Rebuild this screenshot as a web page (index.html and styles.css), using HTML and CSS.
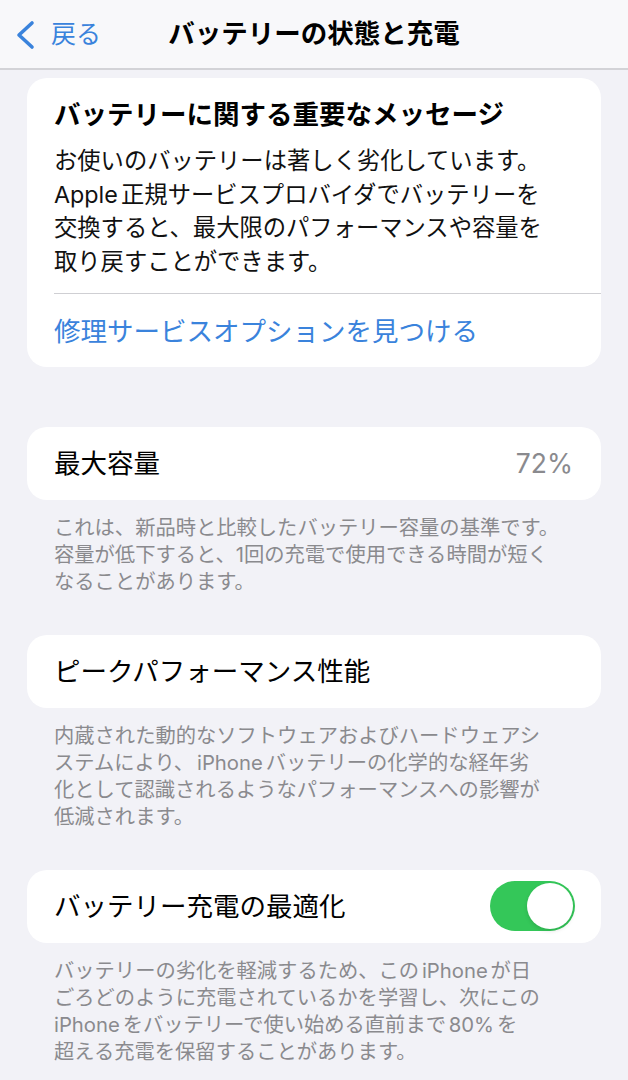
FILE: index.html
```html
<!DOCTYPE html>
<html lang="ja">
<head>
<meta charset="utf-8">
<title>バッテリーの状態と充電</title>
<link rel="stylesheet" href="styles.css">
</head>
<body>
<header class="navbar">
  <a class="back" href="#">
    <svg class="chev" width="22" height="30" viewBox="0 0 22 30" aria-hidden="true">
      <polyline points="18,3 5,15 18,27" fill="none" stroke="#3a83dc" stroke-width="3.6" stroke-linecap="round" stroke-linejoin="round"/>
    </svg>
    <span>戻る</span>
  </a>
  <h1 class="nav-title">バッテリーの状態と充電</h1>
  <div></div>
</header>

<main class="content">
  <section class="card msg-card">
    <div class="msg">
      <h2 class="msg-title">バッテリーに関する重要なメッセージ</h2>
      <p class="msg-body">お使いのバッテリーは著しく劣化しています。<br><span class="lat first">Apple</span>正規サービスプロバイダでバッテリーを<br>交換すると、最大限のパフォーマンスや容量を<br>取り戻すことができます。</p>
    </div>
    <a class="link-row" href="#">修理サービスオプションを見つける</a>
  </section>

  <section class="group first-group">
    <div class="card row">
      <span class="label">最大容量</span>
      <span class="value">72%</span>
    </div>
    <p class="footer">これは、新品時と比較したバッテリー容量の基準です。<br>容量が低下すると、1回の充電で使用できる時間が短く<br>なることがあります。</p>
  </section>

  <section class="group">
    <div class="card row">
      <span class="label">ピークパフォーマンス性能</span>
    </div>
    <p class="footer">内蔵された動的なソフトウェアおよびハードウェアシ<br>ステムにより、<span class="lat">iPhone</span>バッテリーの化学的な経年劣<br>化として認識されるようなパフォーマンスへの影響が<br>低減されます。</p>
  </section>

  <section class="group">
    <div class="card row">
      <span class="label">バッテリー充電の最適化</span>
      <span class="toggle on"><span class="knob"></span></span>
    </div>
    <p class="footer">バッテリーの劣化を軽減するため、この<span class="lat">iPhone</span>が日<br>ごろどのように充電されているかを学習し、次にこの<br><span class="lat first">iPhone</span>をバッテリーで使い始める直前まで<span class="lat">80%</span>を<br>超える充電を保留することがあります。</p>
  </section>
</main>
</body>
</html>
```

FILE: styles.css
```css
* { box-sizing: border-box; }

html, body {
  margin: 0;
  padding: 0;
}

body {
  background: #f2f2f7;
  font-family: "Inter", "Noto Sans CJK JP", sans-serif;
  color: #000;
  width: 628px;
  min-height: 1080px;
}

.navbar {
  height: 70px;
  background: #f8f8fa;
  border-bottom: 2px solid #d3d3d7;
  display: grid;
  grid-template-columns: 1fr auto 1fr;
  align-items: center;
  padding-bottom: 2px;
}

.back {
  display: flex;
  align-items: center;
  gap: 15px;
  padding-left: 14px;
  color: #3a83dc;
  text-decoration: none;
  font-size: 25px;
  line-height: 34px;
  margin-top: 2px;
}

.chev { display: block; margin-top: 2px; }

.nav-title {
  margin: 0;
  font-size: 26.5px;
  font-weight: 700;
  line-height: 34px;
  letter-spacing: 0;
}

.content {
  padding: 8px 27px 0;
}

.card {
  background: #fff;
  border-radius: 20px;
}

.msg {
  padding: 19px 27px 14px;
}

.msg-title {
  margin: 0;
  font-size: 26.5px;
  font-weight: 700;
  line-height: 34px;
}

.msg-body {
  margin: 13px 0 0;
  font-size: 23.3px;
  line-height: 33.7px;
  color: #111;
}

.lat { margin-right: 0.14em; margin-left: 0.14em; }
.lat.first { margin-left: 0; }

.link-row {
  display: flex;
  align-items: center;
  height: 74px;
  margin-left: 27px;
  border-top: 1px solid #cfcfd3;
  color: #3a83dc;
  text-decoration: none;
  font-size: 26.5px;
  padding-bottom: 2px;
}

.group { margin-top: 40px; }
.group.first-group { margin-top: 60px; }

.row {
  height: 73px;
  display: flex;
  align-items: center;
  justify-content: space-between;
  padding: 0 26px 0 27px;
}

.label {
  font-size: 26.5px;
  line-height: 34px;
}

.value {
  font-size: 26.5px;
  color: #8a8a8e;
  line-height: 34px;
  padding-right: 2px;
}

.footer {
  margin: 0;
  padding: 14px 27px 0;
  font-size: 20.3px;
  line-height: 27px;
  color: #8a8a8e;
}

.toggle {
  width: 85px;
  height: 50px;
  border-radius: 25px;
  background: #34c759;
  display: flex;
  justify-content: flex-end;
  align-items: center;
  padding: 2px;
}

.knob {
  width: 46px;
  height: 46px;
  border-radius: 50%;
  background: #fff;
  box-shadow: 0 2px 4px rgba(0,0,0,0.12);
}
```
